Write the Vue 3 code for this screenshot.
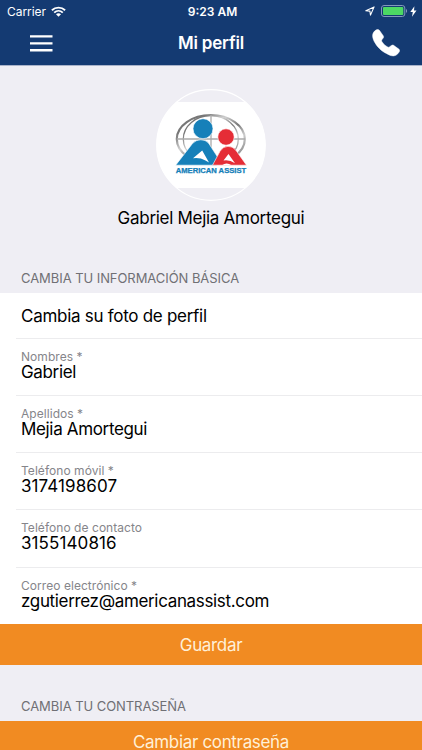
<template>
  <div class="screen">
    <header class="header">
      <div class="status-bar">
        <div class="status-left">
          <span class="carrier">Carrier</span>
          <svg class="wifi" width="15" height="11" viewBox="0 0 15 11">
            <path d="M.9 4.2C4.6.7 10.4.7 14.1 4.2M3.2 6.6C5.7 4.3 9.3 4.3 11.8 6.6" fill="none" stroke="#fff" stroke-width="1.9" />
            <path d="M5 8.3C6.4 7 8.6 7 10 8.3L7.5 10.8z" fill="#fff" />
          </svg>
        </div>
        <div class="time">9:23 AM</div>
        <div class="status-right">
          <svg width="10" height="10" viewBox="0 0 10 10">
            <path d="M.8 4.7L9.1.9 5.5 9.1 4.9 5.1z" fill="none" stroke="#fff" stroke-width="1.1" stroke-linejoin="round" />
          </svg>
          <svg class="battery" width="27" height="12" viewBox="0 0 27 12">
            <rect x=".5" y=".5" width="23.3" height="11" rx="2.5" fill="none" stroke="#8299bb" />
            <rect x="2" y="2" width="20.3" height="8" rx="1" fill="#4cd964" />
            <path d="M25 4.1c1.5.5 1.5 3.3 0 3.8z" fill="#8299bb" />
          </svg>
          <svg class="bolt" width="7" height="11" viewBox="0 0 7 11">
            <path d="M4.4.2L.3 6.1h2.5L2 10.8l4.5-6.3H4z" fill="#fff" />
          </svg>
        </div>
      </div>
      <nav class="nav-bar">
        <button class="icon-btn" aria-label="Menu">
          <svg width="23" height="17" viewBox="0 0 23 17">
            <path d="M0 1.4h22.5M0 8.4h22.5M0 15.3h22.5" stroke="#fff" stroke-width="2.4" />
          </svg>
        </button>
        <h1 class="title">Mi perfil</h1>
        <button class="icon-btn" aria-label="Llamar">
          <svg width="28" height="28" viewBox="0 0 28 28">
            <path d="M1.1 4.2C1.9 2.5 3.6 1 5.1.6c.8-.3 1.700 0 2.300.7l3.800 5.400c.6.9.5 1.800-.2 2.600L9.900 10.700c-.4.500-.4 1.100-.1 1.700 1.200 2.100 3.600 4.400 6 5.700.6.300 1.200.2 1.600-.2l1.900-1.300c.8-.7 1.700-.7 2.600-.1l4.900 3.600c.8.6 1 1.300.7 2.100-.7 1.700-2.400 3.600-4.200 4.300-2.200.9-5 .2-8.500-1.800C9.500 22.300 4.700 17.400 2.200 12.400.7 9.300.1 6.500 1.100 4.200z" fill="#fff" stroke="#fff" stroke-width=".5" />
          </svg>
        </button>
      </nav>
    </header>

    <section class="profile">
      <div class="avatar">
        <svg width="110" height="112" viewBox="0 0 110 112">
          <defs>
            <clipPath id="avatarClip"><ellipse cx="55" cy="56" rx="54.5" ry="55.5" /></clipPath>
            <linearGradient id="silver" x1="0" y1="0" x2="1" y2="1">
              <stop offset="0" stop-color="#777" />
              <stop offset=".2" stop-color="#777" />
              <stop offset=".38" stop-color="#d0d0d0" />
              <stop offset=".55" stop-color="#777" />
              <stop offset=".7" stop-color="#ccc" />
              <stop offset="1" stop-color="#666" />
            </linearGradient>
          </defs>
          <rect y="13" width="110" height="86" fill="#fff" clip-path="url(#avatarClip)" />
          <ellipse cx="55" cy="56" rx="54.3" ry="55.3" fill="none" stroke="#fff" stroke-width="1.2" />
          <g fill="none" stroke="url(#silver)">
            <ellipse cx="54.8" cy="50" rx="34" ry="24" stroke-width="2.2" />
            <ellipse cx="54.8" cy="50" rx="27.5" ry="23.5" stroke-width="1.3" />
          </g>
          <path d="M21 50H89M55 26V74" fill="none" stroke="#aaa" stroke-width="1.3" />
          <path d="M19.7 76.2L36.500 54.500Q40 50.800 44.800 50.800Q49.500 50.800 52.500 54L63.500 71 60.500 76.200z" fill="#1680b9" stroke="#fff" stroke-width=".6" />
          <path d="M46.200 61.500L37 69.300Q43.500 68.300 49.500 71.500L53 73.500z" fill="#fff" />
          <path d="M56.500 76.200L64 62.300Q67.200 57.300 72 57.300Q76.500 57.300 79.700 61L90.500 76.200z" fill="#e52d36" stroke="#fff" stroke-width=".6" />
          <path d="M72.500 65L67.500 71.500Q73.500 70.500 79 74.200z" fill="#fff" />
          <path d="M66 76.200Q70.500 73 75.500 76.200z" fill="#fff" />
          <circle cx="47" cy="39.7" r="10" fill="#1680b9" stroke="#fff" stroke-width=".6" />
          <circle cx="70" cy="48" r="8.2" fill="#e52d36" stroke="#fff" stroke-width=".6" />
          <text class="logo-text" x="19.7" y="84" textLength="70.5" lengthAdjust="spacingAndGlyphs">AMERICAN ASSIST</text>
        </svg>
      </div>
      <div class="name">Gabriel Mejia Amortegui</div>
    </section>

    <h2 class="section-title">CAMBIA TU INFORMACIÓN BÁSICA</h2>
    <div class="list">
      <div class="photo-row">Cambia su foto de perfil</div>
      <div v-for="field in fields" :key="field.label" class="field">
        <div class="label">{{ field.label }}</div>
        <div class="value" :class="field.type">{{ field.value }}</div>
      </div>
    </div>
    <button class="action">Guardar</button>
    <h2 class="section-title password-title">CAMBIA TU CONTRASEÑA</h2>
    <button class="action">Cambiar contraseña</button>
  </div>
</template>

<script setup>
import { ref } from 'vue';

const fields = ref([
  { label: 'Nombres *', value: 'Gabriel', type: 'text' },
  { label: 'Apellidos *', value: 'Mejia Amortegui', type: 'text' },
  { label: 'Teléfono móvil *', value: '3174198607', type: 'phone' },
  { label: 'Teléfono de contacto', value: '3155140816', type: 'phone' },
  { label: 'Correo electrónico *', value: 'zgutierrez@americanassist.com', type: 'text' },
]);
</script>

<style>
body {
  margin: 0;
  overflow: hidden;
}
</style>

<style scoped>
.screen {
  height: 750px;
  overflow: hidden;
  background: #efeef4;
  color: #000;
  font-family: Inter, "Liberation Sans", sans-serif;
}

button {
  border: none;
  padding: 0;
  background: none;
  font-family: inherit;
}

svg {
  display: block;
}

.header {
  height: 65px;
  background: #143a72;
  color: #fff;
  border-bottom: 1px solid #a9b3ca;
}

.status-bar {
  display: grid;
  grid-template-columns: 1fr auto 1fr;
  align-items: center;
  height: 22px;
  padding: 0 5px 0 7px;
  font-size: 12px;
}

.status-left,
.status-right {
  display: flex;
  align-items: center;
}

.status-right {
  justify-content: flex-end;
}

.carrier {
  letter-spacing: -0.05px;
}

.wifi {
  margin-left: 5px;
}

.time {
  padding-left: 1px;
  font-weight: 600;
}

.battery {
  margin-left: 6px;
}

.bolt {
  margin-left: 2px;
}

.nav-bar {
  display: flex;
  align-items: center;
  justify-content: space-between;
  height: 42px;
  padding: 0 22px 0 30px;
}

.title {
  margin: 0 3px 0 0;
  font-size: 17px;
  font-weight: 600;
  letter-spacing: -0.2px;
}

.profile {
  display: flex;
  flex-direction: column;
  align-items: center;
  height: 193px;
  padding-top: 23px;
  box-sizing: border-box;
}

.logo-text {
  font-family: "Liberation Sans", sans-serif;
  font-size: 6.5px;
  font-weight: bold;
  fill: #1680b9;
  stroke: #1680b9;
  stroke-width: 0.25px;
}

.name {
  margin-top: 5px;
  font-size: 17px;
  line-height: 24px;
  letter-spacing: -0.29px;
}

.section-title {
  height: 34px;
  margin: 0;
  padding: 10px 21px 0;
  box-sizing: border-box;
  color: #707075;
  font-size: 13px;
  font-weight: 400;
  line-height: 18px;
  letter-spacing: -0.06px;
}

.list {
  height: 331px;
  padding-left: 16px;
  background: #fff;
}

.photo-row {
  height: 44.5px;
  padding-left: 5px;
  font-size: 17px;
  line-height: 46px;
  letter-spacing: -0.28px;
}

.field {
  height: 57.3px;
  padding: 11px 0 0 5px;
  box-sizing: border-box;
  border-top: 1px solid #ececee;
}

.label {
  color: #85858a;
  font-size: 12px;
  line-height: 14px;
  letter-spacing: 0.05px;
}

.value {
  font-size: 17px;
  line-height: 17px;
  letter-spacing: -0.34px;
}

.value.phone {
  letter-spacing: 0.1px;
}

.action {
  display: block;
  width: 100%;
  height: 41px;
  padding-top: 1px;
  background: #f18b22;
  color: #fff0d8;
  font-size: 17px;
  line-height: 40px;
  letter-spacing: -0.34px;
}

.password-title {
  height: 56px;
  padding-top: 32px;
}
</style>
